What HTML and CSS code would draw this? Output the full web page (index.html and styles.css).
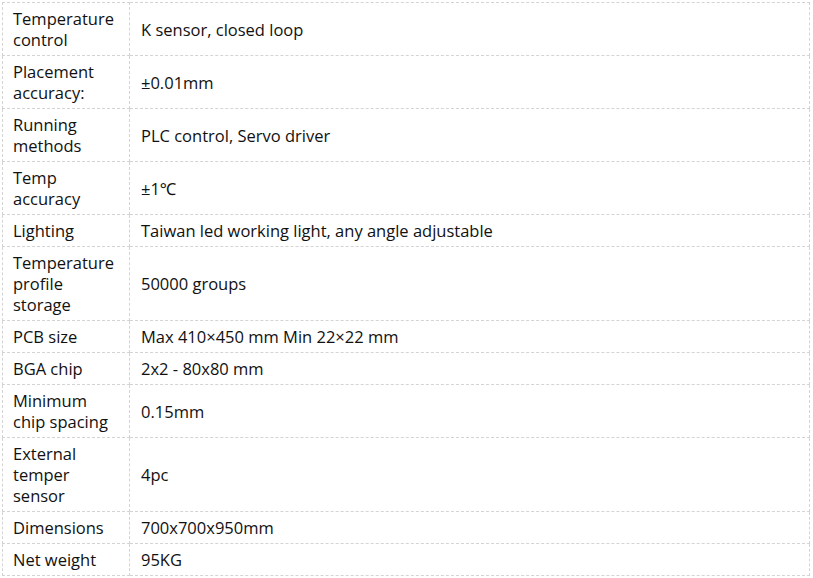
FILE: index.html
```html
<!DOCTYPE html>
<html lang="en">
<head>
<meta charset="utf-8">
<title>Specifications</title>
<link rel="stylesheet" href="styles.css">
</head>
<body>
<table class="spec">
  <colgroup><col class="c-label"><col class="c-value"></colgroup>
  <tbody>
    <tr><td>Temperature control</td><td>K sensor, closed loop</td></tr>
    <tr><td>Placement accuracy:</td><td>±0.01mm</td></tr>
    <tr><td>Running methods</td><td>PLC control, Servo driver</td></tr>
    <tr><td>Temp accuracy</td><td>±1℃</td></tr>
    <tr><td>Lighting</td><td>Taiwan led working light, any angle adjustable</td></tr>
    <tr><td>Temperature profile storage</td><td>50000 groups</td></tr>
    <tr><td>PCB size</td><td>Max 410×450 mm Min 22×22 mm</td></tr>
    <tr><td>BGA chip</td><td>2x2 - 80x80 mm</td></tr>
    <tr><td>Minimum chip spacing</td><td>0.15mm</td></tr>
    <tr><td>External temper sensor</td><td>4pc</td></tr>
    <tr><td>Dimensions</td><td>700x700x950mm</td></tr>
    <tr><td>Net weight</td><td>95KG</td></tr>
  </tbody>
</table>
</body>
</html>
```
FILE: styles.css
```css
html, body {
  margin: 0;
  padding: 0;
  background: #fff;
}
body {
  padding: 2px 0 0 2px;
  font-family: "Open Sans", "Noto Sans", "DejaVu Sans", sans-serif;
  font-size: 16.5px;
  line-height: 21px;
  color: #111;
}
.spec {
  border-collapse: collapse;
  table-layout: fixed;
  width: 808px;
}
.c-label { width: 127px; }
.spec td {
  border: 1px dashed #d4d4d4;
  padding: 5px 12px 5px 10px;
  vertical-align: middle;
  text-align: left;
}
.spec td + td {
  padding-left: 11px;
}
```
